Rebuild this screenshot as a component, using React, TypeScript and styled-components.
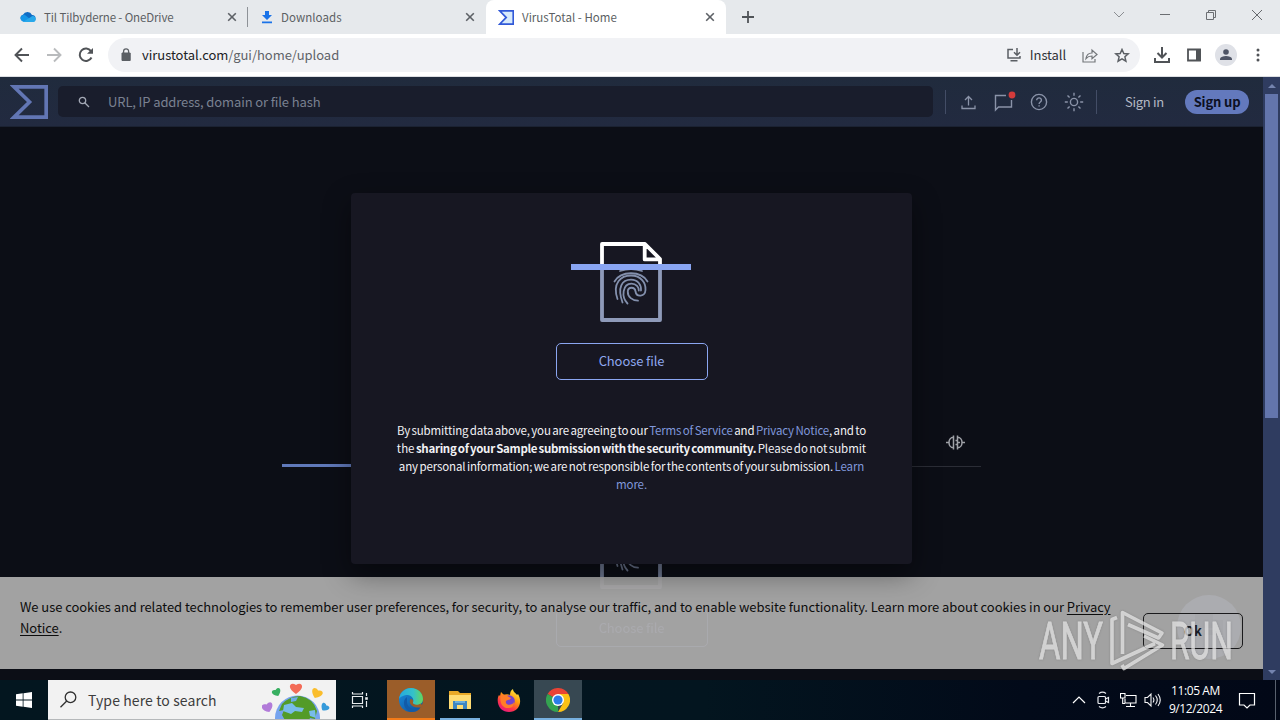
import React from "react";
import styled, { createGlobalStyle } from "styled-components";

const GlobalStyle = createGlobalStyle`
  * { box-sizing: border-box; }
  body { margin: 0; overflow: hidden; background: #0c0d15; }
  svg { display: block; flex: none; }
`;

const sans = `"Noto Sans CJK SC", "Noto Sans", sans-serif`;

const Desktop = styled.div`
  position: relative;
  display: flex;
  flex-direction: column;
  width: 1280px;
  height: 720px;
  overflow: hidden;
  font-family: ${sans};
  white-space: nowrap;
`;

/* Browser chrome */
const TabStrip = styled.div`
  display: flex;
  height: 34px;
  flex: none;
  background: #e6e9ec;
`;
const Tab = styled.div<{ $w: number; $active?: boolean; $divided?: boolean; $pad: number }>`
  position: relative;
  display: flex;
  align-items: center;
  width: ${(p) => p.$w}px;
  height: 34px;
  padding: 0 11px 0 ${(p) => p.$pad}px;
  border-radius: 8px 8px 0 0;
  background: ${(p) => (p.$active ? "#fff" : "transparent")};
  &::after {
    content: "";
    display: ${(p) => (p.$divided ? "block" : "none")};
    position: absolute;
    right: 0;
    top: 7px;
    width: 1px;
    height: 20px;
    background: #8e9297;
  }
`;
const TabTitle = styled.span<{ $ls?: number }>`
  flex: 1;
  height: 18px;
  margin: -1px 0 0 8px;
  font-size: 11.5px;
  line-height: 18px;
  letter-spacing: ${(p) => p.$ls ?? -0.12}px;
  color: #5c5f63;
`;
const NewTab = styled.div`
  display: flex;
  align-items: center;
  margin-left: 16px;
`;
const WindowControls = styled.div`
  display: flex;
  align-items: center;
  gap: 34px;
  height: 29px;
  margin-left: auto;
  padding-right: 17px;
`;
const Toolbar = styled.div`
  display: flex;
  align-items: center;
  height: 43px;
  flex: none;
  background: #fff;
  border-bottom: 1px solid #dcdee2;
`;
const NavButtons = styled.div`
  display: flex;
  gap: 16px;
  width: 108px;
  padding-left: 14px;
`;
const AddressBar = styled.div`
  display: flex;
  align-items: center;
  width: 1032px;
  height: 34px;
  padding: 0 10px 0 12px;
  border-radius: 17px;
  background: #f1f2f5;
`;
const Url = styled.span`
  flex: 1;
  margin-left: 10px;
  font-size: 13px;
  line-height: 20px;
  letter-spacing: -0.03px;
  color: #5f6368;
  b { font-weight: 400; color: #202124; }
`;
const InstallLabel = styled.span`
  margin: 0 16px 0 8px;
  font-size: 13px;
  line-height: 20px;
  letter-spacing: -0.1px;
  color: #303236;
`;
const StarSlot = styled.div`
  margin-left: 16px;
`;
const ToolbarActions = styled.div`
  display: flex;
  align-items: center;
  gap: 11px;
  padding-left: 12px;
`;
const Avatar = styled.div`
  display: grid;
  place-items: center;
  width: 22px;
  height: 22px;
  margin: 0 0 0 -1px;
  border-radius: 50%;
  background: #dfe1e7;
`;

/* VirusTotal page */
const Page = styled.div`
  display: flex;
  height: 603px;
  flex: none;
`;
const Viewport = styled.div`
  position: relative;
  width: 1263px;
  height: 603px;
  overflow: hidden;
  background: #0c0e16;
`;
const Header = styled.header`
  display: flex;
  align-items: center;
  height: 50px;
  padding-left: 10px;
  background: linear-gradient(#202b3d, #222a40);
  border-bottom: 1px solid #1b2232;
`;
const SearchField = styled.div`
  display: flex;
  align-items: center;
  width: 875px;
  height: 31px;
  margin: 0 12px 0 10px;
  padding-left: 20px;
  border-radius: 5px;
  background: #191d2c;
`;
const Placeholder = styled.span`
  margin-left: 18px;
  font-size: 13px;
  line-height: 20px;
  letter-spacing: -0.12px;
  color: #7a8191;
`;
const HeaderIcons = styled.div`
  display: flex;
  align-items: center;
  justify-content: space-between;
  width: 152px;
  height: 24px;
  padding: 0 12px 0 13px;
  border: solid #434d66;
  border-width: 0 1px;
`;
const HelpSlot = styled.div`
  margin: 0 1px 0 -2px;
`;
const SignIn = styled.span`
  width: 60px;
  margin-left: 28px;
  font-size: 13px;
  line-height: 20px;
  letter-spacing: -0.3px;
  color: #b3b8c4;
`;
const SignUp = styled.span`
  width: 64px;
  height: 24px;
  border-radius: 12px;
  background: #6379bd;
  color: #0c1022;
  font-size: 13px;
  font-weight: 700;
  line-height: 24px;
  letter-spacing: -0.15px;
  text-align: center;
`;
const UploadPane = styled.main`
  display: flex;
  flex-direction: column;
  align-items: center;
  width: 699px;
  margin: 303px auto 0;
`;
const PaneTabs = styled.div`
  display: flex;
  justify-content: flex-end;
  align-self: stretch;
  height: 37px;
  padding: 4px 16px 0;
  border-bottom: 1px solid #2b2d36;
`;
const PaneIndicator = styled.div`
  align-self: flex-start;
  width: 175px;
  height: 3px;
  margin-top: -3px;
  background: #6079ba;
`;
const PaneUpload = styled.div`
  display: flex;
  flex-direction: column;
  align-items: center;
  margin-top: 42px;
  opacity: 0.75;
`;
const ScanArt = styled.div`
  width: 122px;
  height: 80px;
  margin-right: 1px;
`;
const ChooseButton = styled.div`
  width: 152px;
  height: 37px;
  margin-top: 21px;
  border: 1px solid #8ba6f1;
  border-radius: 5px;
  color: #8ea8ef;
  font-size: 13px;
  line-height: 34px;
  letter-spacing: -0.1px;
  text-align: center;
`;
const ChatBubble = styled.div`
  position: absolute;
  left: 1177px;
  top: 518px;
  display: grid;
  place-items: center;
  width: 64px;
  height: 64px;
  border-radius: 50%;
  background: #7f9dd5;
`;
const CookieBanner = styled.aside`
  position: absolute;
  left: 0;
  right: 0;
  top: 500px;
  display: flex;
  justify-content: space-between;
  height: 92px;
  padding: 20px 20px 0;
  background: rgba(174, 173, 173, 0.93);
`;
const CookieText = styled.p`
  margin: -1px 0 0;
  font-size: 13px;
  line-height: 21px;
  letter-spacing: -0.065px;
  color: #0d0d0d;
  span { display: block; }
  u { text-underline-offset: 2px; }
`;
const OkButton = styled.div`
  flex: none;
  width: 100px;
  height: 36px;
  margin-top: 16px;
  border: 1px solid #1a1a1c;
  border-radius: 5px;
  color: #1b1e28;
  font-size: 13px;
  font-weight: 700;
  line-height: 34px;
  text-align: center;
`;
const Dialog = styled.section`
  position: absolute;
  left: 351px;
  top: 116px;
  display: flex;
  flex-direction: column;
  align-items: center;
  width: 561px;
  height: 371px;
  padding-top: 49px;
  border-radius: 4px;
  background: #171722;
  box-shadow: 0 10px 28px rgba(0, 0, 0, 0.42);
`;
const Terms = styled.p`
  margin: 41px 0 0;
  font-size: 11.5px;
  line-height: 18px;
  word-spacing: -1px;
  text-align: center;
  color: #f2f2f5;
  b { letter-spacing: -0.29px; }
`;
const TermsLine = styled.span<{ $ls?: number }>`
  display: block;
  letter-spacing: ${(p) => p.$ls ?? 0}px;
`;
const TermsLink = styled.a`
  color: #8098dc;
`;
const ScrollBar = styled.div`
  display: flex;
  flex-direction: column;
  align-items: center;
  justify-content: space-between;
  width: 17px;
  padding: 0 1px;
  background: #2f3c60;
`;
const ScrollThumb = styled.div`
  width: 13px;
  height: 324px;
  margin-bottom: auto;
  background: #6375ac;
`;
const ScrollArrow = styled.div`
  display: grid;
  place-items: center;
  height: 17px;
`;
const Watermark = styled.svg`
  position: absolute;
  left: 1036px;
  top: 604px;
  filter: drop-shadow(0 0 1px rgba(60, 60, 60, 0.35));
`;

/* Windows taskbar */
const Taskbar = styled.footer`
  display: flex;
  height: 40px;
  flex: none;
  background: linear-gradient(90deg, #03161f, #03151f 55%, #020a19 80%, #020817);
`;
const TaskSlot = styled.div<{ $w: number; $ml?: number; $bg?: string; $bar?: string }>`
  display: grid;
  place-items: center;
  width: ${(p) => p.$w}px;
  height: 40px;
  margin-left: ${(p) => p.$ml ?? 0}px;
  background: ${(p) => p.$bg ?? "transparent"};
  box-shadow: ${(p) => (p.$bar ? `inset 0 -2px ${p.$bar}` : "none")};
`;
const TaskSearch = styled.div`
  display: flex;
  align-items: center;
  width: 288px;
  height: 40px;
  padding-left: 12px;
  background: #f2f2f2;
  border-bottom: 1px solid #b5b8ba;
`;
const TaskSearchLabel = styled.span`
  width: 174px;
  margin-left: 11px;
  font-size: 14px;
  line-height: 22px;
  letter-spacing: 0.1px;
  color: #3d3d3d;
`;
const Tray = styled.div`
  display: flex;
  align-items: center;
  margin-left: auto;
`;
const TrayIcons = styled.div`
  display: flex;
  align-items: center;
  gap: 7px;
`;
const Clock = styled.div`
  width: 67px;
  margin-right: 9px;
  font-family: "Open Sans", sans-serif;
  font-size: 12px;
  line-height: 18px;
  letter-spacing: -0.4px;
  text-align: center;
  color: #fff;
`;
const ShowDesktop = styled.div`
  width: 5px;
  height: 40px;
  margin-left: 19px;
  border-left: 1px solid #59616e;
`;

const Close = () => (
  <svg width="10" height="10" viewBox="0 0 10 10" stroke="#5d6166" strokeWidth="1.6">
    <path d="M1.2 1.2l7.6 7.6M8.8 1.2L1.2 8.8" />
  </svg>
);

const Sigma = ({ size, color, stroke, fill = "none" }: { size: [number, number]; color: string; stroke: number; fill?: string }) => (
  <svg width={size[0]} height={size[1]} viewBox="0 0 38 34" preserveAspectRatio="none" fill={fill} stroke={color} strokeWidth={stroke}>
    <path d="M4 1.8H36.2V32.2H4L19.5 17Z" strokeMiterlimit="3" />
  </svg>
);

const ScanFile = () => (
  <ScanArt>
    <svg width="122" height="80" viewBox="0 0 122 80" fill="none">
      <path d="M32 24V78H90V24" stroke="#8e9ab9" strokeWidth="3.8" strokeLinejoin="round" />
      <path d="M32 24V2H75L90 17V24M74.700 2V17.400H90" stroke="#fff" strokeWidth="3.8" strokeLinejoin="round" />
      <g stroke="#8390ad" strokeWidth="1.8" strokeLinecap="round" fill="none" transform="translate(61 46)">
        <path d="M-11-17Q0-21 11-17" />
        <path d="M-16.500-6.500C-10-17.500 10-17.500 16.500-6.500" />
        <path d="M-13.500 11C-19-5-10-12.500 0-12.500C10-12.500 15-5 14.500 2C14 9 5.500 9.500 4.500 3.500C4-1.500-3-1.500-3.200 3.500C-3.500 9 1.500 12.500 7 12.700" />
        <path d="M-8.500 14.500C-14-1-9-8.300 0-8.300C7-8.300 10.500-3 10 2.500" />
        <path d="M-3.500 15.500C-10 9-8.500-4.200.5-4.300C5.500-4.300 7.800-.5 7.800 2.500" />
      </g>
      <path d="M1 25H121" stroke="#89a5f2" strokeWidth="6" />
    </svg>
  </ScanArt>
);

const Edge = () => (
  <svg width="26" height="26" viewBox="0 0 26 26">
    <defs>
      <linearGradient id="edgeTop" x1="0" x2="1"><stop stopColor="#25a9e0" /><stop offset=".6" stopColor="#35c1c8" /><stop offset="1" stopColor="#65d85a" /></linearGradient>
      <linearGradient id="edgeLow" x1="0" x2="1" y2="1"><stop stopColor="#1a8ddc" /><stop offset="1" stopColor="#0c4e9b" /></linearGradient>
    </defs>
    <circle cx="13" cy="13" r="12" fill="url(#edgeLow)" />
    <path d="M1 12C2 5 7 1 13 1c7 0 12 5 12 11 0 4-3 6-6 6-4 0-5-2-4-3 1-2 0-6-5-7-4 0-8 2-9 4z" fill="url(#edgeTop)" />
    <path d="M9 10c-5 3-4 13 4 15 4 0 7-1 9-4-7 3-13-1-13-6z" fill="#125ba8" />
    <path d="M12.500 12c-2 3 0 9 8 8.500 2 0 3-.5 4-1.500l-1.500-2.500c-4 2.500-9 1-8-1.500.5-1 .5-2.500-2.500-3z" fill="#9b5d29" />
  </svg>
);

const Explorer = () => (
  <svg width="24" height="20" viewBox="0 0 24 20">
    <path d="M1 1h9l2 2h11v16H1z" fill="#e9a927" />
    <path d="M1 5h22v14H1z" fill="#ffdc73" />
    <path d="M5 11h14v8h-4v-4H9v4H5z" fill="#3f86c2" />
    <path d="M7 11h10v2H7z" fill="#6caedd" />
  </svg>
);

const Firefox = () => (
  <svg width="24" height="25" viewBox="0 0 24 25">
    <defs><linearGradient id="fox" x1=".8" x2=".2" y2="1"><stop stopColor="#fff044" /><stop offset=".4" stopColor="#ff980e" /><stop offset=".7" stopColor="#ff3647" /><stop offset="1" stopColor="#e31587" /></linearGradient></defs>
    <path d="M4 4l3 3c2-1 4-1 6 0 0-3 1-5 3-6 0 3 3 4 4 6l1-1c3 5 3 11-1 15-4 4-12 4-16 0C0 17 0 10 2 7l1 1z" fill="url(#fox)" />
    <circle cx="12" cy="13" r="5.8" fill="#7543cf" />
    <path d="M4 7c5-2 7 2 10 3-1 3-6 1-5 5 1 3 7 2 8-1 0 5-3 6-6 6-6 0-9-6-7-13z" fill="#ff7d28" />
  </svg>
);

const ChromeLogo = () => (
  <svg width="24" height="24" viewBox="0 0 24 24">
    <path d="M12 12L1.6 6A12 12 0 0 1 22.4 6z" fill="#e94335" />
    <path d="M12 12V24A12 12 0 0 1 1.6 6z" fill="#34a350" />
    <path d="M12 6h10.4A12 12 0 0 1 12 24l5.2-9z" fill="#fbc116" />
    <circle cx="12" cy="12" r="6" fill="#fff" />
    <circle cx="12" cy="12" r="4.6" fill="#2b7de9" />
  </svg>
);

const heart = "M0 6C-10 0-6-7 0-3C6-7 10 0 0 6Z";
const EarthDoodle = () => (
  <svg width="72" height="39" viewBox="0 0 72 39">
    <circle cx="35.500" cy="38" r="22.500" fill="#76a4ee" />
    <path d="M20 24q8-8 18-8 13 2 17 15l-2 8-5-1-3 6h-9l-4-5-8 3-4-7 2-5-5 1z" fill="#539b28" />
    <path d="M22 25l8-2 4 4 8 1-2 4-7-1-4 3-8-3zM47 31l6-1 1 8-6-2z" fill="#78bce9" />
    <path d="M29 18l7-1-2 4-5 1z" fill="#6dabe5" />
    <path d={heart} transform="translate(34 8)" fill="#f36b57" />
    <path d={heart} transform="translate(14.500 12) rotate(-24) scale(.72)" fill="#38af61" />
    <path d={heart} transform="translate(55 13) rotate(24) scale(.9)" fill="#fabd2c" />
    <path d={heart} transform="translate(5.500 27) rotate(-20) scale(.9)" fill="#b27bd9" />
    <path d={heart} transform="translate(63 27) rotate(40) scale(.7)" fill="#359ada" />
  </svg>
);

export default function App() {
  return (
    <Desktop>
      <GlobalStyle />
      <TabStrip>
        <Tab $w={248} $pad={20} $divided>
          <svg width="16" height="12" viewBox="0 0 16 12">
            <path d="M3.5 10.5A3.5 3.5 0 0 1 3 3.7 5 5 0 0 1 12 4a3.3 3.3 0 0 1 1 6.5z" fill="#0f6cc4" />
            <path d="M5 4l8.5 6.8H4A3.5 3.5 0 0 1 1 5.6C2 4 4 3.5 5 4z" fill="#1595e6" />
            <path d="M3 11l9-5.800c3-1 5 3 3 5-.5.6-1 .8-2 .8z" fill="#28a8ea" />
          </svg>
          <TabTitle>Til Tilbyderne - OneDrive</TabTitle>
          <Close />
        </Tab>
        <Tab $w={238} $pad={13}>
          <svg width="12" height="14" viewBox="0 0 12 14" fill="#1a73e8">
            <path d="M4 1h4v4h3L6 10 1 5h3zM1 11.5h10v1.7H1z" />
          </svg>
          <TabTitle $ls={0.05}>Downloads</TabTitle>
          <Close />
        </Tab>
        <Tab $w={240} $pad={12} $active>
          <Sigma size={[16, 15]} color="#3159d8" stroke={4} fill="#d7eafb" />
          <TabTitle $ls={0.03}>VirusTotal - Home</TabTitle>
          <Close />
        </Tab>
        <NewTab>
          <svg width="12" height="12" viewBox="0 0 12 12" stroke="#505458" strokeWidth="1.8"><path d="M6 0v12M0 6h12" /></svg>
        </NewTab>
        <WindowControls>
          <svg width="12" height="8" viewBox="0 0 12 8" fill="none" stroke="#8b8e92"><path d="M1 1l5 5 5-5" /></svg>
          <svg width="12" height="2" viewBox="0 0 12 2" fill="#6b6e72"><path d="M1 0h10v1H1z" /></svg>
          <svg width="12" height="12" viewBox="0 0 12 12" fill="none" stroke="#6b6e72"><path d="M1.5 3.5h7v7h-7zM3.5 3V1.5h7v7H9" /></svg>
          <svg width="12" height="12" viewBox="0 0 12 12" stroke="#66696d"><path d="M1 1l10 10M11 1L1 11" /></svg>
        </WindowControls>
      </TabStrip>
      <Toolbar>
        <NavButtons>
          <svg width="16" height="16" viewBox="0 0 16 16" fill="none" stroke="#505357" strokeWidth="1.9"><path d="M15 8H2M8 1.5L1.5 8 8 14.5" /></svg>
          <svg width="16" height="16" viewBox="0 0 16 16" fill="none" stroke="#b9bbbd" strokeWidth="1.9"><path d="M1 8h13M8 1.5L14.5 8 8 14.5" /></svg>
          <svg width="16" height="16" viewBox="0 0 16 16" fill="none" stroke="#505357" strokeWidth="2"><path d="M13.5 10.5A6.2 6.2 0 1 1 13 4.2" /><path d="M9 6.8h6V1z" fill="#505357" stroke="none" /></svg>
        </NavButtons>
        <AddressBar>
          <svg width="12" height="14" viewBox="0 0 12 14"><path d="M2 5h8.2v7.5H2z" fill="#5b5f64" stroke="#5b5f64" strokeLinejoin="round" /><path d="M3.6 5V3.3a2.5 2.5 0 0 1 5 0V5" fill="none" stroke="#5b5f64" strokeWidth="1.3" /></svg>
          <Url><b>virustotal.com</b>/gui/home/upload</Url>
          <svg width="16" height="14" viewBox="0 0 16 14" fill="none" stroke="#5b5f64" strokeWidth="1.5"><path d="M7 1.500H2v8.500h12V8M4.500 12.700h7M11 0v7M8 4.200l3 3 3-3" /></svg>
          <InstallLabel>Install</InstallLabel>
          <svg width="16" height="15" viewBox="0 0 16 15" fill="none" stroke="#74777b" strokeWidth="1.2"><path d="M1 4v10h12v-3M4 10.5C4.5 7 6.5 5 10 5V2l5 4.5-5 4.2V8C7.5 8 5.5 8.7 4 10.5z" /></svg>
          <StarSlot><svg width="16" height="15" viewBox="0 0 16 15" fill="none" stroke="#5b5f64" strokeWidth="1.5"><path d="M8 1.5l1.8 4 4.4.4-3.3 2.9 1 4.3L8 10.8l-3.9 2.3 1-4.3-3.3-2.9 4.4-.4z" /></svg></StarSlot>
        </AddressBar>
        <ToolbarActions>
          <svg width="20" height="18" viewBox="0 0 20 18" fill="none" stroke="#505357" strokeWidth="2"><path d="M10 1v10M5.500 7l4.500 4.500L14.500 7M3 12v4h14v-4" /></svg>
          <svg width="22" height="16" viewBox="0 0 22 16"><path d="M5 2.500h12v11H5z" fill="none" stroke="#505357" strokeWidth="1.8" /><path d="M13 2h5v12h-5z" fill="#505357" /></svg>
          <Avatar><svg width="14" height="14" viewBox="0 0 14 14" fill="#4f5566"><circle cx="7" cy="4" r="2.8" /><path d="M1 12V10.500C2 7 12 7 13 10.500V12z" /></svg></Avatar>
          <svg width="20" height="14" viewBox="0 0 20 14" fill="#505357"><circle cx="10" cy="2" r="1.5" /><circle cx="10" cy="7" r="1.5" /><circle cx="10" cy="12" r="1.5" /></svg>
        </ToolbarActions>
      </Toolbar>

      <Page>
        <Viewport>
          <Header>
            <Sigma size={[38, 34]} color="#6276b4" stroke={3.7} />
            <SearchField>
              <svg width="12" height="12" viewBox="0 0 12 12" fill="none" stroke="#a3a8b5" strokeWidth="1.3"><circle cx="4.500" cy="4.500" r="3.200" /><path d="M7 7l4 4" /></svg>
              <Placeholder>URL, IP address, domain or file hash</Placeholder>
            </SearchField>
            <HeaderIcons>
              <svg width="18" height="18" viewBox="0 0 18 18" fill="none" stroke="#8a93a8" strokeWidth="1.3"><path d="M9.500 12.500V3.500M6 7l3.500-3.500L13 7M3 12.500v3h13v-3" /></svg>
              <svg width="24" height="22" viewBox="0 0 24 22" fill="none" stroke="#8a93a8" strokeWidth="1.4"><path d="M14 4.500H3.500V19l3-3H19.500V9" /><circle cx="20" cy="4" r="3.400" fill="#d33b3b" stroke="none" /></svg>
              <HelpSlot>
                <svg width="18" height="18" viewBox="0 0 18 18" fill="none" stroke="#8a93a8" strokeWidth="1.4"><circle cx="9" cy="9" r="7.600" /><path d="M6.700 7.200c0-3.200 4.800-3 4.700 0 0 1.800-2.300 1.800-2.300 3.800M9.100 12.300v1.300" /></svg>
              </HelpSlot>
              <svg width="20" height="20" viewBox="0 0 20 20" fill="none" stroke="#8a93a8" strokeWidth="1.4"><circle cx="10" cy="10" r="3.600" /><path d="M10 .8v3M10 16.200v3M.8 10h3M16.200 10h3M3.500 3.500l2.100 2.100M14.400 14.400l2.100 2.100M16.500 3.500l-2.100 2.100M5.600 14.400l-2.100 2.100" /></svg>
            </HeaderIcons>
            <SignIn>Sign in</SignIn>
            <SignUp>Sign up</SignUp>
          </Header>
          <UploadPane>
            <PaneTabs>
              <svg width="20" height="18" viewBox="0 0 20 18" fill="none" stroke="#a0a2a8" strokeWidth="1.5"><path d="M1 8.500h3M17 8.500h3M8.500 3.200C2.500 3.200 2.500 13.800 8.500 13.800M8.500 1.500v14M12.500 3.200c6 0 6 10.600 0 10.600M12.500 1.500v14M10.500 6.500h2M12.500 8.500h2.500M10.500 10.500h2" /></svg>
            </PaneTabs>
            <PaneIndicator />
            <PaneUpload>
              <ScanFile />
              <ChooseButton>Choose file</ChooseButton>
            </PaneUpload>
          </UploadPane>
          <ChatBubble>
            <svg width="30" height="28" viewBox="0 0 30 28" fill="#4c5f9a"><path d="M1 1h18v14H8l-5 5v-5H1zM21 7h8v15h-2v5l-5-5H10v-5h11z" /></svg>
          </ChatBubble>
          <CookieBanner>
            <CookieText>
              <span>We use cookies and related technologies to remember user preferences, for security, to analyse our traffic, and to enable website functionality. Learn more about cookies in our <u>Privacy</u></span>
              <span><u>Notice</u>.</span>
            </CookieText>
            <OkButton>Ok</OkButton>
          </CookieBanner>
          <Dialog>
            <ScanFile />
            <ChooseButton>Choose file</ChooseButton>
            <Terms>
              <TermsLine $ls={-0.14}>By submitting data above, you are agreeing to our <TermsLink>Terms of Service</TermsLink> and <TermsLink>Privacy Notice</TermsLink>, and to</TermsLine>
              <TermsLine $ls={-0.05}>the <b>sharing of your Sample submission with the security community.</b> Please do not submit</TermsLine>
              <TermsLine $ls={-0.12}>any personal information; we are not responsible for the contents of your submission. <TermsLink>Learn</TermsLink></TermsLine>
              <TermsLine $ls={-0.12}><TermsLink>more.</TermsLink></TermsLine>
            </Terms>
          </Dialog>
        </Viewport>
        <ScrollBar>
          <ScrollArrow><svg width="8" height="4" viewBox="0 0 8 4" fill="#7483ae"><path d="M0 4l4-4 4 4z" /></svg></ScrollArrow>
          <ScrollThumb />
          <ScrollArrow><svg width="8" height="4" viewBox="0 0 8 4" fill="#7483ae"><path d="M0 0l4 4 4-4z" /></svg></ScrollArrow>
        </ScrollBar>
      </Page>

      <Taskbar>
        <TaskSlot $w={48}>
          <svg width="16" height="16" viewBox="0 0 16 16" fill="#fff"><path d="M0 2.200L6.700 1.300V7.600H0zM7.500 1.200L16 0V7.600H7.500zM0 8.400H6.700V14.700L0 13.800zM7.500 8.400H16V16L7.500 14.800z" /></svg>
        </TaskSlot>
        <TaskSearch>
          <svg width="17" height="17" viewBox="0 0 17 17" fill="none" stroke="#303030" strokeWidth="1.3"><circle cx="10.500" cy="6.300" r="5.300" /><path d="M6.700 10L.5 16.300" /></svg>
          <TaskSearchLabel>Type here to search</TaskSearchLabel>
          <EarthDoodle />
        </TaskSearch>
        <TaskSlot $w={48}>
          <svg width="18" height="16" viewBox="0 0 18 16" fill="none" stroke="#e8ecee" strokeWidth="1.2"><path d="M1.500 4.500h10v7h-10zM1.500 0v2h10V0M1.500 16v-2h10v2M15.500 1v3M15.500 9v6" /><path d="M14.200 5.200h2.600v2.600h-2.600z" fill="#e8ecee" stroke="none" /></svg>
        </TaskSlot>
        <TaskSlot $w={48} $ml={3} $bg="#9b5d29" $bar="#f47b18"><Edge /></TaskSlot>
        <TaskSlot $w={40} $ml={5} $bar="#77b0df"><Explorer /></TaskSlot>
        <TaskSlot $w={48} $ml={5}><Firefox /></TaskSlot>
        <TaskSlot $w={48} $ml={1} $bg="#374852" $bar="#77b0df"><ChromeLogo /></TaskSlot>
        <Tray>
          <TrayIcons>
            <svg width="14" height="8" viewBox="0 0 14 8" fill="none" stroke="#fff" strokeWidth="1.2"><path d="M1 7l6-6 6 6" /></svg>
            <svg width="20" height="18" viewBox="0 0 20 18" fill="none" stroke="#e8eaee" strokeWidth="1.2"><rect x="5" y="5.500" width="7.500" height="7" rx="1" /><path d="M12.500 8l3-1.500v5l-3-1.500M6 2.500C8 1 11 1 13 2.500M6 15.500c2 1.500 5 1.500 7 0" /></svg>
            <svg width="17" height="16" viewBox="0 0 17 16" fill="none" stroke="#fff" strokeWidth="1.1"><path d="M6 3.500h10v7.500H5V7M10.500 11v3M6 14.500h9M.5 1.500h4.500V6H.5zM2.700 6v5.500H5" /></svg>
            <svg width="18" height="16" viewBox="0 0 18 16" fill="none" stroke="#f3f3f5" strokeWidth="1.1"><path d="M1 5.500h2.500L7 2v12l-3.500-3.500H1zM9 5.500q1.800 2.500 0 5M11.500 3.500q3.500 4.500 0 9M14 2q4.500 6 0 12" /></svg>
          </TrayIcons>
          <Clock>11:05 AM<br />9/12/2024</Clock>
          <svg width="18" height="17" viewBox="0 0 18 17" fill="none" stroke="#fff" strokeWidth="1.2"><path d="M1.500 1.500h15V13H12l-3 3-3-3H1.500z" /></svg>
          <ShowDesktop />
        </Tray>
      </Taskbar>

      <Watermark width="200" height="70" viewBox="0 0 200 70" fill="none">
        <g opacity=".72" fontFamily="Roboto, sans-serif" fontSize="51" fill="#eee" stroke="#eee" strokeWidth=".8">
          <text x="3" y="55" textLength="64" lengthAdjust="spacingAndGlyphs">ANY</text>
          <text x="134" y="55" textLength="63" lengthAdjust="spacingAndGlyphs">RUN</text>
          <path
            d="M81 13.500L76 15.500V59.500L119 39.500M86.500 50V8.500L126 29L122.500 34L92 20.500M108 32L126.500 41L88 64.500L86 61"
            strokeWidth="3.6"
            strokeLinejoin="round"
            fill="none"
          />
        </g>
      </Watermark>
    </Desktop>
  );
}
